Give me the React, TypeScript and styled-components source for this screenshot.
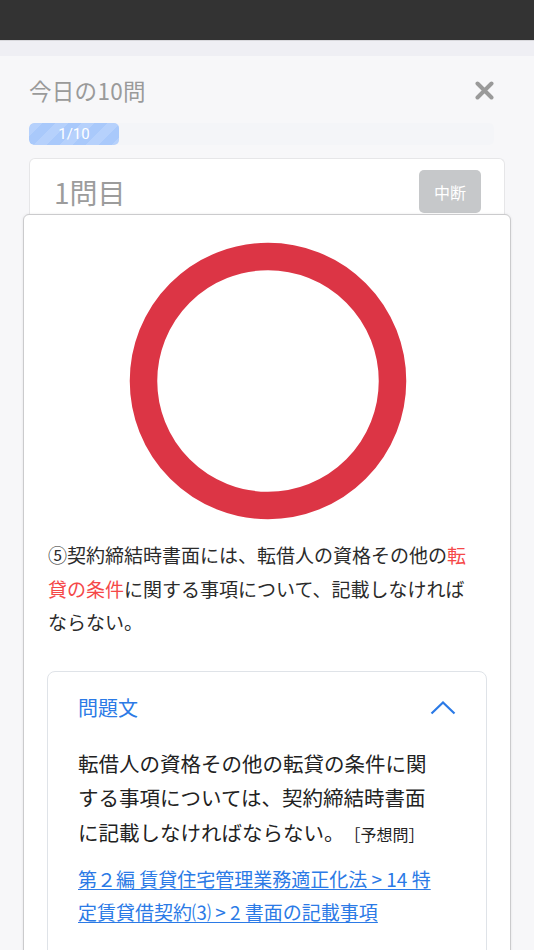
import React from "react";
import styled, { createGlobalStyle } from "styled-components";

const Global = createGlobalStyle`
  html, body { margin: 0; padding: 0; background: #f7f7f9; }
  body { font-family: "Noto Sans CJK JP", "Noto Sans", sans-serif; -webkit-font-smoothing: antialiased; }
  * { box-sizing: border-box; }
`;

const Page = styled.div`
  width: 534px;
  height: 950px;
  overflow: hidden;
  background: #f7f7f9;
  display: flex;
  flex-direction: column;
`;

const TopBar = styled.div`
  height: 41px;
  background: #333333;
  border-bottom: 1px solid #d8d8dc;
  flex-shrink: 0;
`;

const Band = styled.div`
  height: 15px;
  background: #efeff4;
  flex-shrink: 0;
`;

const Content = styled.div`
  padding: 16px 29px 0 29px;
  display: flex;
  flex-direction: column;
`;

const Header = styled.div`
  display: flex;
  align-items: center;
  justify-content: space-between;
  height: 36px;
`;

const Title = styled.h1`
  margin: 0;
  font-size: 22.5px;
  font-weight: 400;
  color: #9a9a9a;
  letter-spacing: 0.3px;
`;

const CloseButton = styled.button`
  border: 0;
  background: none;
  padding: 0;
  margin-right: 11px;
  width: 20px;
  height: 20px;
  display: flex;
  align-items: center;
  justify-content: center;
  cursor: pointer;
`;

const Track = styled.div`
  margin-top: 15px;
  margin-right: 11px;
  height: 22px;
  border-radius: 5px;
  background: #f4f5f8;
  overflow: hidden;
`;

const Fill = styled.div`
  height: 100%;
  border-radius: 5px;
  background-color: #a9c9fb;
  background-image: linear-gradient(
    135deg,
    rgba(255, 255, 255, 0.15) 25%,
    transparent 25%,
    transparent 50%,
    rgba(255, 255, 255, 0.15) 50%,
    rgba(255, 255, 255, 0.15) 75%,
    transparent 75%,
    transparent
  );
  background-size: 26px 26px;
  color: #fff;
  font-size: 15px;
  line-height: 22px;
  text-align: center;
  font-family: "Roboto", "Noto Sans", sans-serif;
`;

const QuestionCard = styled.div`
  margin-top: 13px;
  height: 56px;
  background: #fff;
  border: 1px solid #e6e6e8;
  border-bottom: 0;
  border-radius: 6px 6px 0 0;
  display: flex;
  align-items: flex-start;
  justify-content: space-between;
  padding: 11px 23px 0 24px;
`;

const QuestionNo = styled.div`
  font-size: 28px;
  color: #9c9c9c;
  line-height: 44px;
`;

const PauseButton = styled.button`
  width: 62px;
  height: 43px;
  border: 0;
  border-radius: 5px;
  background: #c6c8ca;
  color: #fff;
  font-family: inherit;
  font-size: 16px;
`;

const Modal = styled.div`
  margin: 0 -6px;
  background: #fff;
  border: 1px solid #cbcbcd;
  border-radius: 6px;
  box-shadow: 0 0 3px rgba(0, 0, 0, 0.08);
  padding: 27px 23px 40px 24px;
  display: flex;
  flex-direction: column;
  min-height: 800px;
`;

const Mark = styled.svg`
  display: block;
  align-self: center;
  margin-left: 1px;
`;

const Statement = styled.p`
  margin: 18px 0 0 0;
  width: 428px;
  font-size: 19px;
  line-height: 33.5px;
  color: #2b2b2b;
`;

const Highlight = styled.span`
  color: #f54848;
`;

const Accordion = styled.div`
  margin-top: 32px;
  margin-left: -1px;
  width: 440px;
  border: 1px solid #dfe3e8;
  border-radius: 8px;
  padding: 22px 30px 30px 30px;
`;

const AccordionHead = styled.div`
  display: flex;
  align-items: center;
  justify-content: space-between;
  height: 28px;
`;

const AccordionTitle = styled.div`
  font-size: 20px;
  color: #2b7ae6;
`;

const Body = styled.p`
  margin: 24px 0 0 0;
  width: 364px;
  font-size: 20.5px;
  line-height: 34.5px;
  color: #222;
`;

const Tag = styled.span`
  font-size: 16px;
  margin-left: 8px;
`;

const Crumb = styled.a`
  display: block;
  margin-top: 11px;
  width: 362px;
  font-size: 19px;
  line-height: 33px;
  color: #2b7ae6;
  text-decoration: underline;
  text-underline-offset: 2px;
`;

export default function App() {
  const done = 1;
  const total = 10;
  return (
    <>
      <Global />
      <Page>
        <TopBar />
        <Band />
        <Content>
          <Header>
            <Title>今日の10問</Title>
            <CloseButton aria-label="close">
              <svg width="19" height="19" viewBox="0 0 19 19">
                <path d="M2.5 2.5 L16.5 16.5 M16.5 2.5 L2.5 16.5" stroke="#9a9a9a" strokeWidth="4" strokeLinecap="round" />
              </svg>
            </CloseButton>
          </Header>
          <Track>
            <Fill style={{ width: `${Math.max(done / total * 100, 19.35)}%` }}>
              {done}/{total}
            </Fill>
          </Track>
          <QuestionCard>
            <QuestionNo>1問目</QuestionNo>
            <PauseButton>中断</PauseButton>
          </QuestionCard>
          <Modal>
            <Mark width="278" height="278" viewBox="0 0 278 278">
              <circle cx="139" cy="139" r="124.5" fill="none" stroke="#dc3545" strokeWidth="27.5" />
            </Mark>
            <Statement>
              ⑤契約締結時書面には、転借人の資格その他の<Highlight>転貸の条件</Highlight>に関する事項について、記載しなければならない。
            </Statement>
            <Accordion>
              <AccordionHead>
                <AccordionTitle>問題文</AccordionTitle>
                <svg width="26" height="14" viewBox="0 0 26 14">
                  <path d="M1.5 12.5 L13 1.5 L24.5 12.5" fill="none" stroke="#2b7ae6" strokeWidth="2.2" />
                </svg>
              </AccordionHead>
              <Body>
                転借人の資格その他の転貸の条件に関する事項については、契約締結時書面に記載しなければならない。<Tag>［予想問］</Tag>
              </Body>
              <Crumb href="#">第２編 賃貸住宅管理業務適正化法 &gt; 14 特定賃貸借契約⑶ &gt; 2 書面の記載事項</Crumb>
            </Accordion>
          </Modal>
        </Content>
      </Page>
    </>
  );
}
